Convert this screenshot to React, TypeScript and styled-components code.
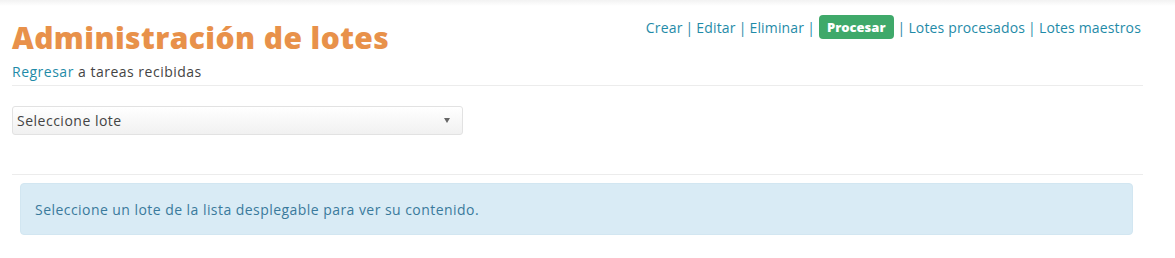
import React from "react";
import styled, { createGlobalStyle } from "styled-components";

const Global = createGlobalStyle`
  html, body { margin: 0; padding: 0; background: #ffffff; }
  body { font-family: "Open Sans", "Liberation Sans", sans-serif; color: #444; }
`;

const Page = styled.div`
  width: 1175px;
  min-height: 258px;
  background: linear-gradient(#f2f2f2 0px, #ffffff 6px);
  padding: 6px 32px 0 12px;
  box-sizing: border-box;
`;

const Header = styled.div`
  display: flex;
  justify-content: space-between;
  align-items: flex-start;
`;

const TitleBlock = styled.div`
  display: flex;
  flex-direction: column;
`;

const Title = styled.h1`
  margin: 14px 0 0 0;
  font-family: "Open Sans", sans-serif;
  font-weight: 800;
  font-size: 30px;
  line-height: 36px;
  color: #e8914a;
  letter-spacing: 0.4px;
`;

const Back = styled.div`
  margin-top: 7px;
  font-size: 14px;
  letter-spacing: 0.5px;
  line-height: 18px;
  color: #444;
`;

const Link = styled.a`
  color: #1f8ba8;
  text-decoration: none;
`;

const Nav = styled.nav`
  display: flex;
  align-items: center;
  gap: 3px;
  margin-top: 9px;
  margin-right: 2px;
  font-size: 14px;
  letter-spacing: 0.15px;
  color: #1f8ba8;
`;

const Sep = styled.span`
  color: #1f8ba8;
`;

const ActiveButton = styled.span`
  display: inline-flex;
  align-items: center;
  height: 24px;
  padding: 0 8px;
  margin: 0 1px;
  background: #3fa96a;
  color: #fff;
  font-weight: 800;
  font-size: 13px;
  letter-spacing: 0;
  border-radius: 4px;
`;

const Rule = styled.hr<{ $top: number }>`
  border: 0;
  border-top: 1px solid #ececec;
  margin: ${(p) => p.$top}px 0 0 0;
`;

const SelectBox = styled.div`
  margin-top: 20px;
  width: 451px;
  height: 29px;
  box-sizing: border-box;
  border: 1px solid #e2e2e2;
  border-radius: 3px;
  background: linear-gradient(#ffffff, #f1f1f1);
  display: flex;
  align-items: center;
  justify-content: space-between;
  padding: 0 12px 0 4px;
  font-size: 14px;
  letter-spacing: 0.5px;
  color: #444;
`;

const Caret = styled.span`
  width: 0;
  height: 0;
  border-left: 3px solid transparent;
  border-right: 3px solid transparent;
  border-top: 5px solid #666;
`;

const Alert = styled.div`
  margin: 8px 10px 0 8px;
  height: 52px;
  box-sizing: border-box;
  background: #d9ebf5;
  border: 1px solid #d2e6f1;
  border-radius: 4px;
  display: flex;
  align-items: center;
  padding: 0 14px;
  font-size: 14px;
  letter-spacing: 0.45px;
  color: #3a7a9c;
`;

export default function App() {
  return (
    <>
      <Global />
      <Page>
        <Header>
          <TitleBlock>
            <Title>Administración de lotes</Title>
            <Back>
              <Link href="#">Regresar</Link> a tareas recibidas
            </Back>
          </TitleBlock>
          <Nav>
            <Link href="#">Crear</Link>
            <Sep>|</Sep>
            <Link href="#">Editar</Link>
            <Sep>|</Sep>
            <Link href="#">Eliminar</Link>
            <Sep>|</Sep>
            <ActiveButton>Procesar</ActiveButton>
            <Sep>|</Sep>
            <Link href="#">Lotes procesados</Link>
            <Sep>|</Sep>
            <Link href="#">Lotes maestros</Link>
          </Nav>
        </Header>
        <Rule $top={4} />
        <SelectBox>
          <span>Seleccione lote</span>
          <Caret />
        </SelectBox>
        <Rule $top={39} />
        <Alert>Seleccione un lote de la lista desplegable para ver su contenido.</Alert>
      </Page>
    </>
  );
}
